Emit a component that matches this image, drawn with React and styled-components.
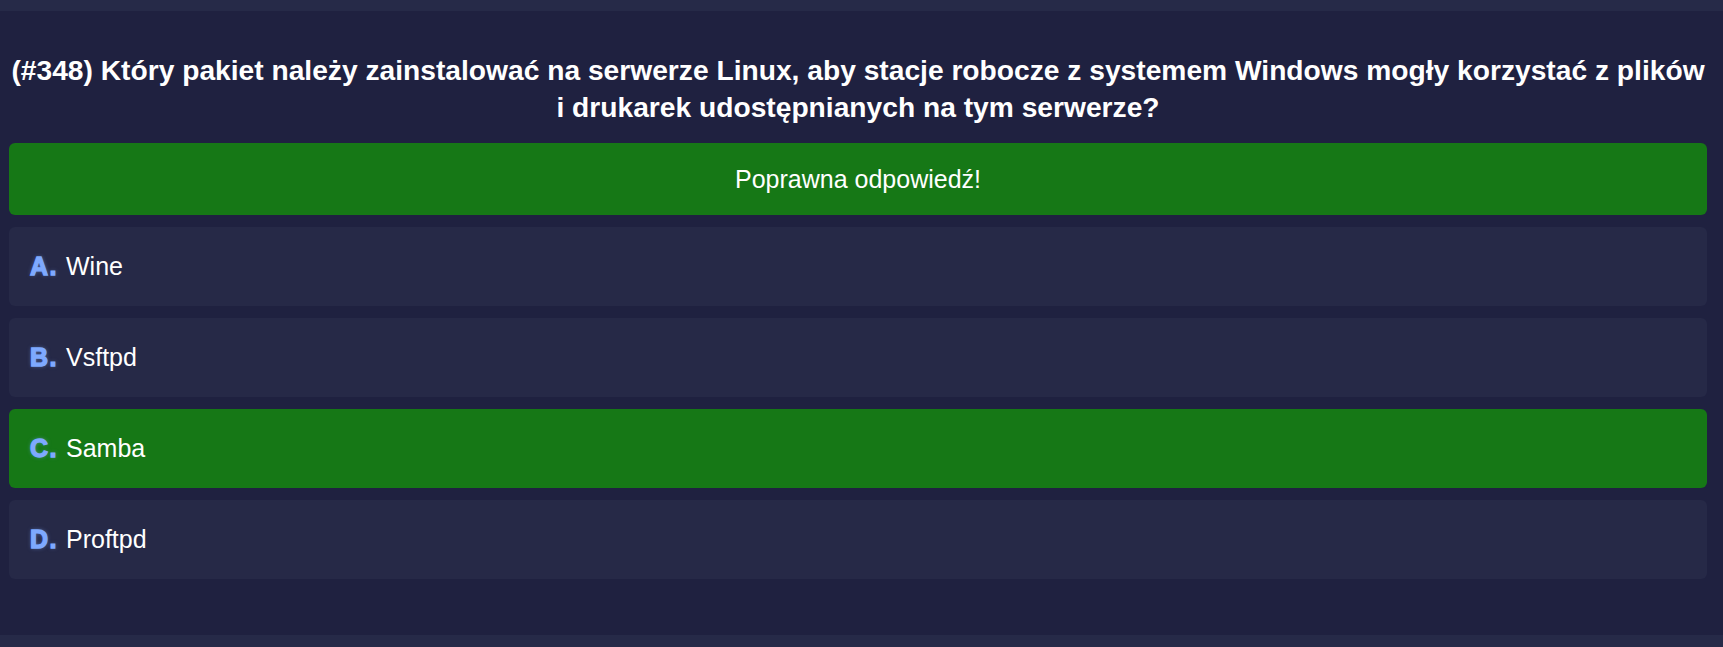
import { createGlobalStyle, styled } from "styled-components";

const GlobalStyle = createGlobalStyle`
  html, body {
    margin: 0;
    padding: 0;
    background: #262a48;
  }

  body {
    font-family: "Liberation Sans", Arial, sans-serif;
    color: #ffffff;
  }
`;

const StyledQuiz = styled.main`
  margin: 11px 0 12px 0;
  padding: 41px 16px 56px 9px;
  background-color: #1f2140;

  .question {
    margin: 0 0 17px 0;
    font-size: 28.2px;
    font-weight: 700;
    line-height: 37px;
    text-align: center;
    color: #ffffff;
  }
`;

const ResultBar = styled.div`
  display: flex;
  justify-content: center;
  align-items: center;
  height: 72px;
  margin-bottom: 12px;
  border-radius: 6px;
  background-color: ${(props) => (props.$correct ? "#167816" : "#8a1c1c")};
  font-size: 25px;
  color: #ffffff;
`;

const AnswerList = styled.ul`
  display: flex;
  flex-direction: column;
  gap: 12px;
  margin: 0;
  padding: 0;
  list-style: none;
`;

const Answer = styled.li`
  display: flex;
  align-items: center;
  height: 79px;
  padding: 0 21px;
  border-radius: 6px;
  background-color: ${(props) => (props.$correct ? "#167816" : "#262947")};
  font-size: 25px;
  color: #ffffff;
`;

const Letter = styled.span`
  margin-right: 8px;
  font-weight: 700;
  color: #7ea9ff;
  -webkit-text-stroke: 1.3px #7ea9ff;
  letter-spacing: 1.5px;
  text-shadow: 0 0 4px rgba(126, 169, 255, 0.55);
`;

const answers = [
  { letter: "A", text: "Wine" },
  { letter: "B", text: "Vsftpd" },
  { letter: "C", text: "Samba", correct: true },
  { letter: "D", text: "Proftpd" },
];

export default function App() {
  return (
    <>
      <GlobalStyle />
      <StyledQuiz>
        <h2 className="question">
          (#348) Który pakiet należy zainstalować na serwerze Linux, aby stacje
          robocze z systemem Windows mogły korzystać z plików i drukarek
          udostępnianych na tym serwerze?
        </h2>

        <ResultBar $correct>Poprawna odpowiedź!</ResultBar>

        <AnswerList>
          {answers.map((a) => (
            <Answer key={a.letter} $correct={a.correct}>
              <Letter>{a.letter}.</Letter>
              {a.text}
            </Answer>
          ))}
        </AnswerList>
      </StyledQuiz>
    </>
  );
}
